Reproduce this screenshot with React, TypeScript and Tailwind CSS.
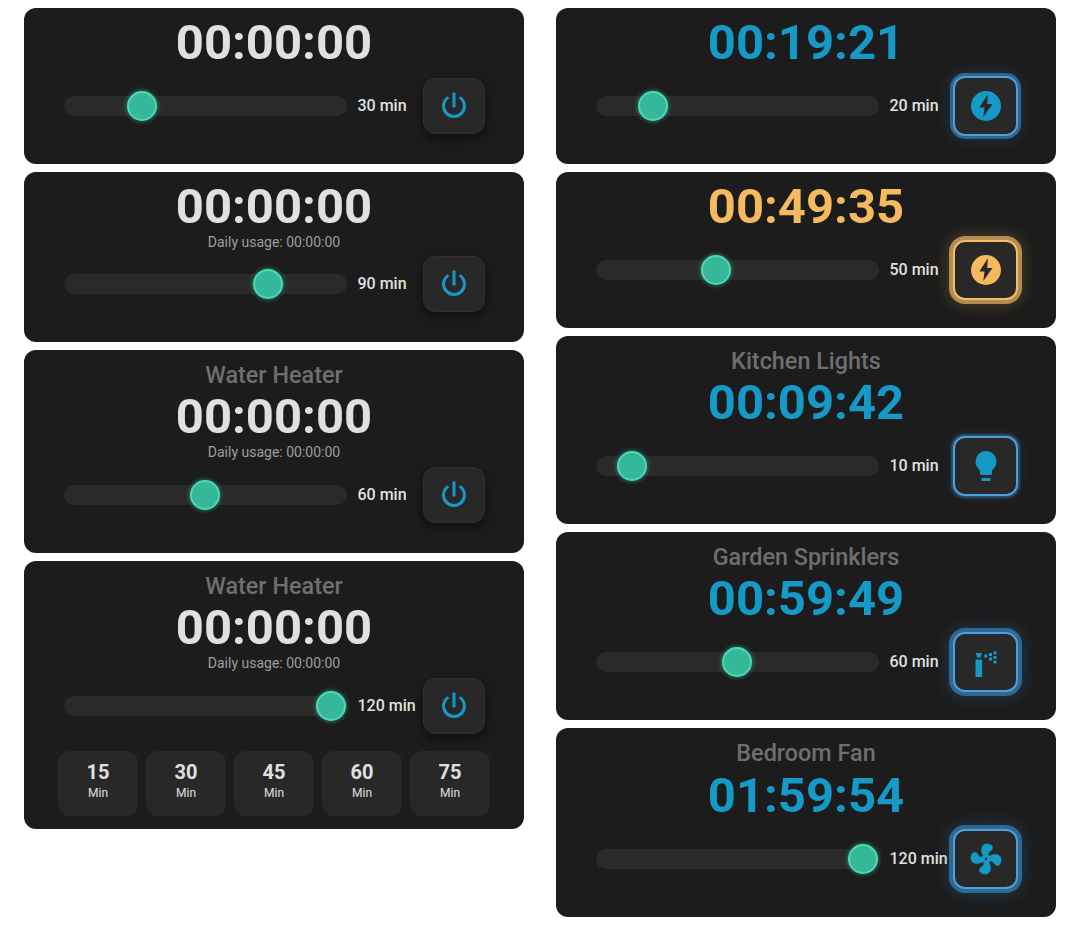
import React from "react"

const POWER = "M16.56,5.44L15.11,6.89C16.84,7.94 18,9.83 18,12A6,6 0 0,1 12,18A6,6 0 0,1 6,12C6,9.83 7.16,7.94 8.88,6.88L7.44,5.44C5.36,6.88 4,9.28 4,12A8,8 0 0,0 12,20A8,8 0 0,0 20,12C20,9.28 18.64,6.88 16.56,5.44M13,3H11V13H13"
const BOLT = "M12,2A10,10 0 0,0 2,12A10,10 0 0,0 12,22A10,10 0 0,0 22,12A10,10 0 0,0 12,2M13.2,4.2L7.6,13H11L10.2,19.4L16.3,10.6H12.8Z"
const BULB = "M12,2A7,7 0 0,0 5,9C5,11.38 6.19,13.47 8,14.74V17A1,1 0 0,0 9,18H15A1,1 0 0,0 16,17V14.74C17.81,13.47 19,11.38 19,9A7,7 0 0,0 12,2M9,20V22H15V20Z"
const FAN = "M12.5,2C17,2 17.11,5.57 14.75,6.75C13.76,7.24 13.32,8.29 13.13,9.22C13.61,9.42 14.03,9.73 14.35,10.13C18.05,8.13 22.03,8.92 22.03,12.5C22.03,17 18.46,17.1 17.28,14.73C16.78,13.74 15.72,13.3 14.79,13.11C14.59,13.59 14.28,14 13.88,14.34C15.87,18.03 15.08,22 11.5,22C7,22 6.91,18.42 9.27,17.24C10.25,16.75 10.69,15.71 10.89,14.79C10.4,14.59 9.97,14.27 9.65,13.87C5.96,15.85 2,15.07 2,11.5C2,7 5.56,6.89 6.74,9.26C7.24,10.25 8.29,10.68 9.22,10.87C9.41,10.39 9.73,9.97 10.14,9.65C8.15,5.96 8.94,2 12.5,2Z"

type Glow = "none" | "thin" | "mid" | "wide" | "amber"
type IconName = "power" | "bolt" | "bulb" | "spray" | "fan"

function Icon({ name, amber }: { name: IconName; amber?: boolean }) {
  const color = amber ? "fill-[#f5b95f]" : "fill-[#159ac8]"
  if (name === "spray") {
    return (
      <svg viewBox="0 0 24 24" className={`w-9 h-9 ${color}`}>
        <polygon points="5,6 9.4,6 8.2,9 6.2,9" />
        <rect x="5" y="10.4" width="4.4" height="11.6" />
        <rect x="10.9" y="7" width="2" height="2" />
        <rect x="14" y="6" width="2" height="2" />
        <rect x="14" y="9" width="2" height="2" />
        <rect x="17" y="4.9" width="2" height="2" />
        <rect x="17" y="8" width="2" height="2" />
        <rect x="17" y="11" width="2" height="2" />
      </svg>
    )
  }
  if (name === "fan") {
    return (
      <svg viewBox="0 0 24 24" className={`w-9 h-9 ${color}`}>
        <path d={FAN} className="stroke-[#159ac8] stroke-[0.5]" />
        <circle cx="12" cy="12" r="0.8" className="fill-[#282828]" />
      </svg>
    )
  }
  const paths = { power: POWER, bolt: BOLT, bulb: BULB }
  return (
    <svg viewBox="0 0 24 24" className={`w-9 h-9 ${color}`}>
      <path fillRule="evenodd" d={paths[name]} />
    </svg>
  )
}

function PowerButton({ icon, glow }: { icon: IconName; glow: Glow }) {
  if (glow === "none") {
    return (
      <button className="w-[62px] h-14 shrink-0 flex items-center justify-center rounded-[12px] bg-[#282828] border border-[#303030] shadow-[0_4px_10px_rgba(0,0,0,0.5)]">
        <Icon name={icon} />
      </button>
    )
  }
  const glows = {
    thin: "border-[#4a9fdc] shadow-[0_0_2px_2px_rgba(60,140,200,0.45),0_0_10px_3px_rgba(50,130,190,0.15)]",
    mid: "border-[#4a9fdc] shadow-[0_0_0_3px_rgba(60,140,200,0.6),0_0_12px_5px_rgba(50,130,190,0.2)]",
    wide: "border-[#4a9fdc] shadow-[0_0_0_4px_rgba(60,140,200,0.62),0_0_14px_6px_rgba(50,130,190,0.25)]",
    amber: "border-[#f5be65] shadow-[0_0_0_4px_rgba(245,190,101,0.65),0_0_14px_6px_rgba(245,190,101,0.2)]",
  }
  return (
    <button className={`w-[65px] h-[60px] -ml-[2px] -mr-[1px] -my-[2px] shrink-0 flex items-center justify-center rounded-[12px] bg-[#282828] border-2 ${glows[glow]}`}>
      <Icon name={icon} amber={glow === "amber"} />
    </button>
  )
}

function Slider({ value }: { value: number }) {
  return (
    <div className="relative w-[283px] h-5 shrink-0 rounded-full bg-[#2a2a2a]">
      <div
        className="absolute -top-[5px] w-[30px] h-[30px] rounded-full bg-[#35b899] border-2 border-[#4fd8b5] shadow-[0_0_4px_1px_rgba(53,184,153,0.5)]"
        style={{ left: value * 2.1 + 0.2 }}
      />
    </div>
  )
}

type CardProps = {
  time: string
  value: number
  title?: string
  titleHeight?: string
  usage?: boolean
  timeColor?: string
  icon?: IconName
  glow?: Glow
  presets?: boolean
}

function TimerCard({ time, value, title, titleHeight = "h-8", usage, timeColor = "text-[#e0e0e0]", icon = "power", glow = "none", presets }: CardProps) {
  return (
    <div className={`rounded-[12px] bg-[#1c1c1c] pt-2 ${presets ? "pb-[13px]" : "pb-[30px]"}`}>
      {title && <div className={`${titleHeight} leading-[34px] text-center text-[23.4px] font-medium text-[#6f6f6f]`}>{title}</div>}
      <div className={`h-[52px] leading-[54px] text-center text-[49px] font-bold ${timeColor}`}>{time}</div>
      {usage ? (
        <div className={`h-5 leading-[21px] text-center text-[14px] text-[#9e9e9e] ${title ? "mb-[5px]" : "mb-1"}`}>Daily usage: 00:00:00</div>
      ) : (
        <div className="h-[10px]" />
      )}
      <div className="h-14 flex items-center pl-10">
        <Slider value={value} />
        <div className="ml-[10.5px] w-[65.5px] shrink-0 whitespace-nowrap text-[16px] font-medium text-[#e0e0e0]">{value} min</div>
        <PowerButton icon={icon} glow={glow} />
      </div>
      {presets && (
        <div className="mt-[17px] flex justify-center gap-2">
          {[15, 30, 45, 60, 75].map((m) => (
            <div key={m} className="w-20 h-[65px] pt-[9px] rounded-[12px] bg-[#282828] flex flex-col items-center text-[#e0e0e0]">
              <div className="text-[20px] leading-[24px] font-bold">{m}</div>
              <div className="text-[12px] leading-[18px]">Min</div>
            </div>
          ))}
        </div>
      )}
    </div>
  )
}

export default function App() {
  const blue = "text-[#159ac8]"
  return (
    <div className="min-h-[931px] bg-white pt-2 pl-6 flex items-start gap-8 font-['Roboto',sans-serif]">
      <div className="w-[500px] flex flex-col gap-2">
        <TimerCard time="00:00:00" value={30} />
        <TimerCard time="00:00:00" value={90} usage />
        <TimerCard time="00:00:00" value={60} title="Water Heater" usage />
        <TimerCard time="00:00:00" value={120} title="Water Heater" usage presets />
      </div>
      <div className="w-[500px] flex flex-col gap-2">
        <TimerCard time="00:19:21" value={20} timeColor={blue} icon="bolt" glow="mid" />
        <TimerCard time="00:49:35" value={50} timeColor="text-[#f5b95f]" icon="bolt" glow="amber" />
        <TimerCard time="00:09:42" value={10} title="Kitchen Lights" timeColor={blue} icon="bulb" glow="thin" />
        <TimerCard time="00:59:49" value={60} title="Garden Sprinklers" timeColor={blue} icon="spray" glow="wide" />
        <TimerCard time="01:59:54" value={120} title="Bedroom Fan" titleHeight="h-[33px]" timeColor={blue} icon="fan" glow="wide" />
      </div>
    </div>
  )
}
